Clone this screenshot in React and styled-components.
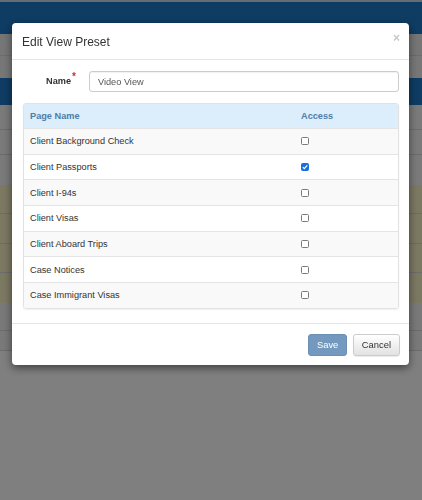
import React from 'react'
import styled, { createGlobalStyle } from 'styled-components'

const GlobalStyle = createGlobalStyle`
    html, body {
        margin: 0;
        padding: 0;
        background: #fff;
    }
    body {
        font-family: "Liberation Sans", Arial, sans-serif;
        color: #333;
    }
`

const Page = styled.div`
    width: 422px;
    height: 500px;
    overflow: hidden;
    background: #fff;
    display: flex;
    flex-direction: column;
`

const TopNav = styled.div`
    height: 32px;
    border-top: 2px solid #c8d8e8;
    background: #1e78c6;
`

const Band = styled.div`
    height: ${p => p.h}px;
    background: ${p => p.bg};
    border-bottom: ${p => (p.line ? '1px solid #d8d8d8' : 'none')};
    box-sizing: border-box;
`

const Overlay = styled.div`
    position: fixed;
    inset: 0;
    background: rgba(0, 0, 0, 0.5);
    display: flex;
    align-items: flex-start;
`

const Modal = styled.div`
    margin: 23px 0 0 12px;
    width: 397px;
    background: #fff;
    border-radius: 4px;
    box-shadow: 0 3px 9px rgba(0, 0, 0, 0.5);
    display: flex;
    flex-direction: column;
`

const Header = styled.div`
    height: 37px;
    box-sizing: border-box;
    border-bottom: 1px solid #e5e5e5;
    padding: 1px 10px 0 10px;
    display: flex;
    align-items: center;
    justify-content: space-between;

    h4 {
        margin: 0;
        font-size: 12px;
        font-weight: normal;
        color: #333;
    }
`

const Close = styled.span`
    font-size: 12px;
    font-weight: bold;
    color: #c8c8c8;
    margin-top: -8px;
    margin-right: -1px;
`

const Body = styled.div`
    padding: 11px 10px 14px 11px;
    display: flex;
    flex-direction: column;
    gap: 11px;
`

const FieldRow = styled.div`
    display: flex;
    align-items: flex-start;
    gap: 13px;
`

const Label = styled.label`
    width: 53px;
    text-align: right;
    font-size: 9.2px;
    font-weight: bold;
    color: #333;
    padding-top: 5px;

    sup {
        color: #c9302c;
        font-size: 10px;
        line-height: 0;
        margin-left: 1px;
    }
`

const Input = styled.div`
    flex: 1;
    height: 21px;
    box-sizing: border-box;
    border: 1px solid #ccc;
    border-radius: 3px;
    box-shadow: inset 0 1px 1px rgba(0, 0, 0, 0.06);
    padding: 0 8px;
    display: flex;
    align-items: center;
    font-size: 9.2px;
    color: #555;
`

const Table = styled.div`
    border: 1px solid #e2e2e2;
    border-radius: 3px;
    overflow: hidden;
    box-shadow: 0 1px 2px rgba(0, 0, 0, 0.06);
`

const Row = styled.div`
    display: grid;
    grid-template-columns: 271px 1fr;
    align-items: center;
    height: ${p => (p.head ? 24 : 25.7)}px;
    box-sizing: border-box;
    border-top: ${p => (p.head ? 'none' : '1px solid #e4e4e4')};
    background: ${p => (p.head ? '#dcedfc' : p.odd ? '#f9f9f9' : '#fff')};
    font-size: 9.2px;
    color: ${p => (p.head ? '#4f7ea8' : '#333')};
    font-weight: ${p => (p.head ? 'bold' : 'normal')};
`

const Cell = styled.div`
    padding-left: 6px;
`

const Check = styled.span`
    display: block;
    width: 8px;
    height: 8px;
    box-sizing: border-box;
    border-radius: 1.5px;
    border: 1px solid ${p => (p.on ? '#1a6fe0' : '#7a7a7a')};
    background: ${p => (p.on ? '#1a6fe0' : '#fff')};
    position: relative;

    svg {
        position: absolute;
        left: -1px;
        top: -1px;
    }
`

const Footer = styled.div`
    border-top: 1px solid #e5e5e5;
    padding: 10px 9px 9px 0;
    display: flex;
    justify-content: flex-end;
    gap: 6px;
`

const Button = styled.button`
    height: 22px;
    padding: 0 ${p => (p.primary ? 7.5 : 8)}px;
    font-family: "Liberation Sans", Arial, sans-serif;
    font-size: 9.4px;
    border-radius: 3px;
    border: 1px solid ${p => (p.primary ? '#6b90b4' : '#ccc')};
    background: ${p => (p.primary ? '#7399be' : 'linear-gradient(#fff, #e2e2e2)')};
    color: ${p => (p.primary ? '#fff' : '#333')};
    box-shadow: ${p => (p.primary ? 'none' : '0 1px 1px rgba(0,0,0,0.08)')};
`

const pages = [
    { name: 'Client Background Check', on: false },
    { name: 'Client Passports', on: true },
    { name: 'Client I-94s', on: false },
    { name: 'Client Visas', on: false },
    { name: 'Client Aboard Trips', on: false },
    { name: 'Case Notices', on: false },
    { name: 'Case Immigrant Visas', on: false },
]

const App = () => {
    return (
        <>
            <GlobalStyle />
            <Page>
                <TopNav />
                <Band h={22} bg="#ececec" line />
                <Band h={22} bg="#efefef" />
                <Band h={27} bg="#1e78c6" />
                <Band h={25} bg="#f4f4f4" line />
                <Band h={25} bg="#f4f4f4" line />
                <Band h={30} bg="#f4f4f4" />
                <Band h={29} bg="#f7f2c4" line />
                <Band h={30} bg="#f7f2c4" line />
                <Band h={29} bg="#f7f2c4" line />
                <Band h={30} bg="#f7f2c4" />
                <Band h={28} bg="#f2f2f2" line />
                <Band h={20} bg="#f2f2f2" line />
            </Page>
            <Overlay>
                <Modal>
                    <Header>
                        <h4>Edit View Preset</h4>
                        <Close>×</Close>
                    </Header>
                    <Body>
                        <FieldRow>
                            <Label>Name<sup>*</sup></Label>
                            <Input>Video View</Input>
                        </FieldRow>
                        <Table>
                            <Row head>
                                <Cell>Page Name</Cell>
                                <Cell>Access</Cell>
                            </Row>
                            {pages.map((p, i) => (
                                <Row key={p.name} odd={i % 2 === 0}>
                                    <Cell>{p.name}</Cell>
                                    <Cell>
                                        <Check on={p.on}>
                                            {p.on && (
                                                <svg width="8" height="8" viewBox="0 0 8 8">
                                                    <path d="M1.8 4.1 L3.3 5.6 L6.3 2.4" fill="none" stroke="#fff" strokeWidth="1.2" />
                                                </svg>
                                            )}
                                        </Check>
                                    </Cell>
                                </Row>
                            ))}
                        </Table>
                    </Body>
                    <Footer>
                        <Button primary>Save</Button>
                        <Button>Cancel</Button>
                    </Footer>
                </Modal>
            </Overlay>
        </>
    )
}

export default App
